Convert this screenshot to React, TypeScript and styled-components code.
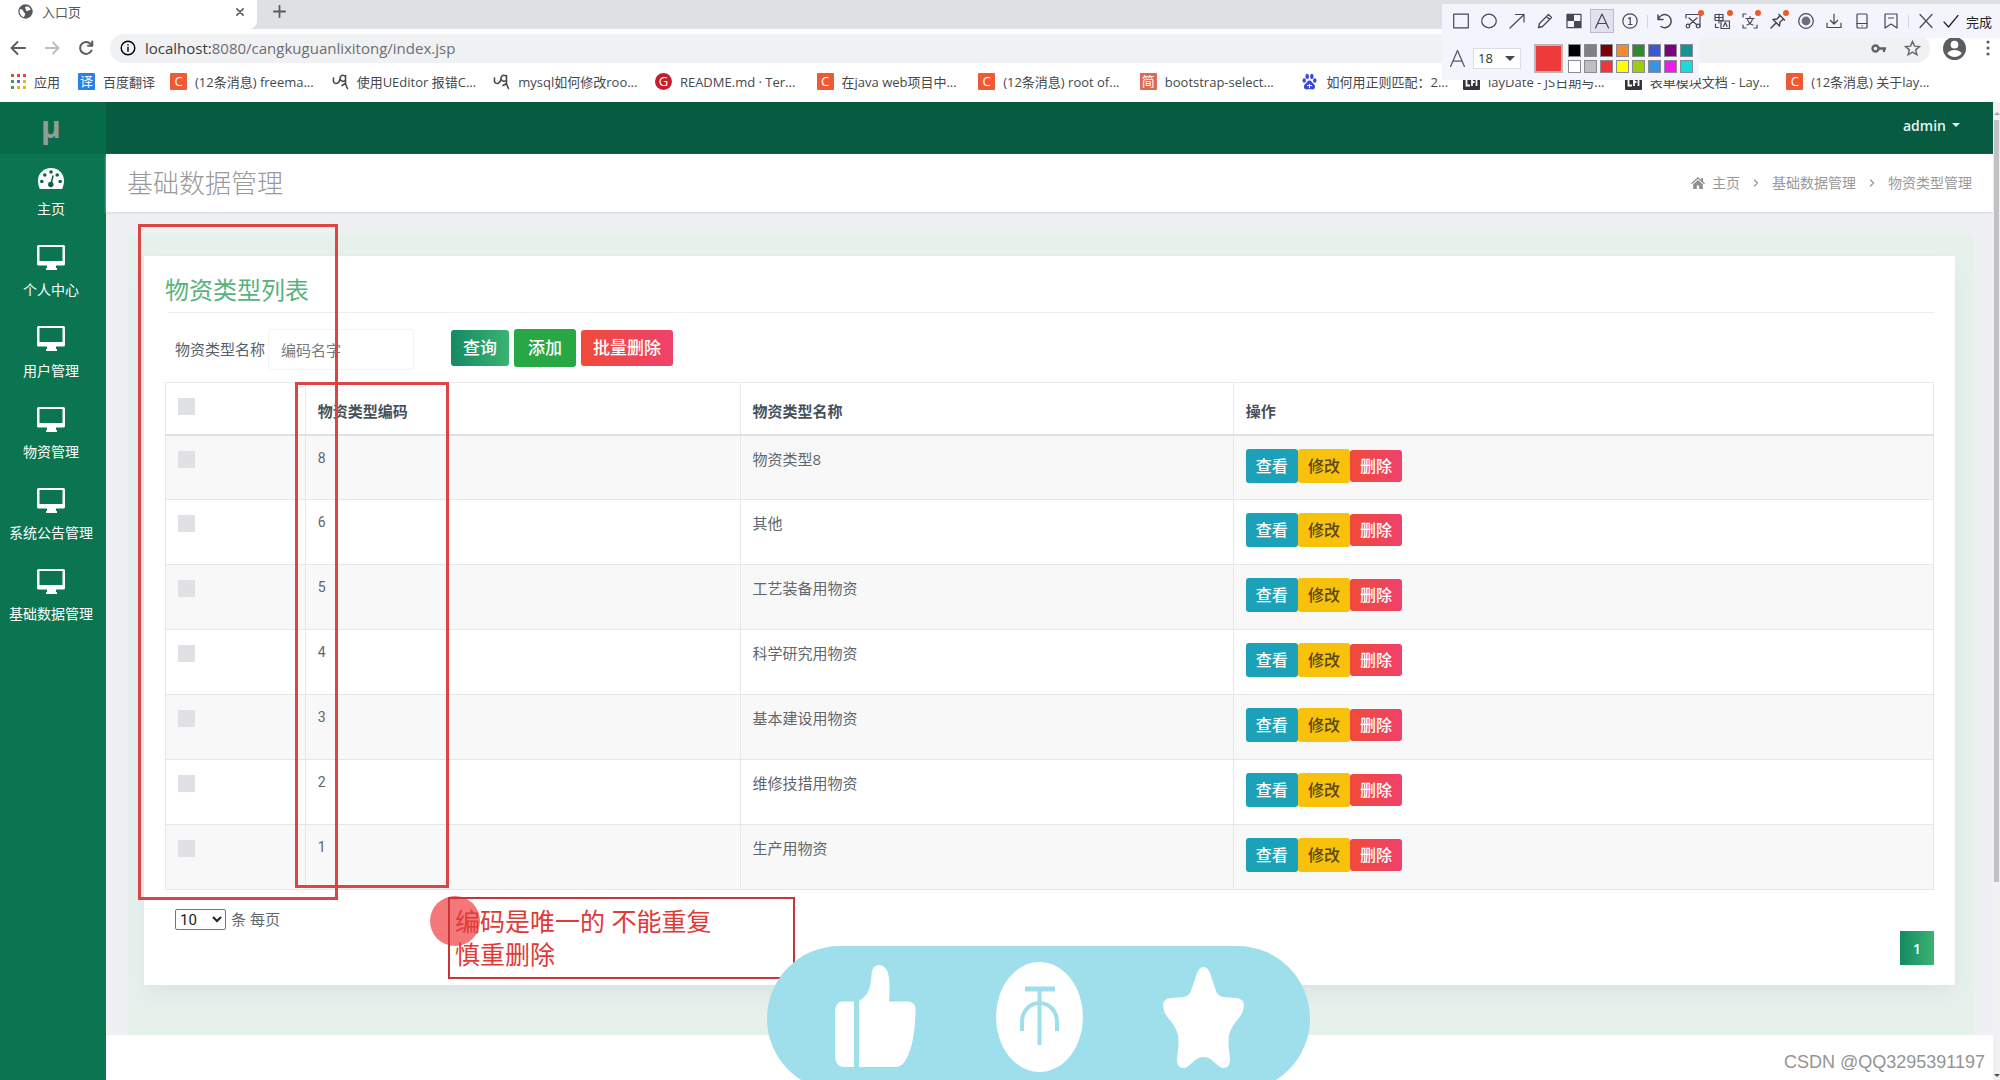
import React from "react";
import styled, { createGlobalStyle, css } from "styled-components";

const Global = createGlobalStyle`
  * { box-sizing: border-box; }
  html, body { margin: 0; padding: 0; }
  body {
    font-family: "Open Sans", "Noto Sans CJK SC", sans-serif;
    background: #fff;
    overflow: hidden;
  }
  button, input, select { font-family: inherit; margin: 0; }
  a { color: inherit; text-decoration: none; }
`;

const Screen = styled.div`
  display: flex;
  flex-direction: column;
  height: 100vh;
  position: relative;
  overflow: hidden;
`;

/* ---------- browser frame ---------- */
const TabStrip = styled.div`
  display: flex;
  height: 29px;
  background: #dfe0e4;
`;
const Tab = styled.div`
  display: flex;
  align-items: center;
  width: 257px;
  padding: 0 12px 6px 18px;
  background: #fff;
  border-radius: 0 0 8px 0;
  font-size: 13px;
  color: #55585c;
`;
const TabTitle = styled.span`
  flex: 1;
  margin-left: 9px;
  line-height: 20px;
`;
const PlainButton = styled.button`
  display: inline-flex;
  align-items: center;
  justify-content: center;
  padding: 0;
  border: 0;
  background: transparent;
  color: #5a5d61;
`;
const NewTab = styled(PlainButton)`
  width: 44px;
  padding-bottom: 6px;
`;
const AddressRow = styled.div`
  display: flex;
  align-items: center;
  height: 38px;
  padding-left: 10px;
  background: #fff;
`;
const NavButtons = styled.div`
  display: flex;
  gap: 18px;
  width: 100px;
`;
const Omnibox = styled.div`
  display: flex;
  align-items: center;
  flex: 1;
  gap: 9px;
  height: 29px;
  padding: 0 9px 0 10px;
  border-radius: 14px;
  background: #f0f1f3;
`;
const UrlActions = styled.div`
  display: flex;
  align-items: center;
  gap: 17px;
`;
const Profile = styled.div`
  display: flex;
  align-items: center;
  justify-content: space-between;
  width: 70px;
  padding: 0 8px 0 13px;
`;
const UrlText = styled.span`
  flex: 1;
  font-size: 15px;
  color: #6b6e72;
  white-space: nowrap;
`;
const Host = styled.span`
  color: #3a3d40;
`;
const Bookmarks = styled.nav`
  display: flex;
  align-items: center;
  height: 35px;
  padding: 0 52px 6px 11px;
  background: #fff;
  font-size: 13px;
  color: #45484c;
`;
const Bookmark = styled.a<{ $w?: number }>`
  display: flex;
  align-items: center;
  gap: 8px;
  width: ${(p) => (p.$w ? p.$w + "px" : "auto")};
  min-width: 0;
  white-space: nowrap;
`;
const BookmarkGrid = styled.div`
  display: grid;
  grid-template-columns: repeat(11, 1fr);
  flex: 1;
  min-width: 0;
`;
const Fav = styled.span<{ $bg: string; $round?: boolean }>`
  display: inline-flex;
  align-items: center;
  justify-content: center;
  flex: none;
  width: 17px;
  height: 17px;
  border-radius: ${(p) => (p.$round ? "50%" : "1px")};
  background: ${(p) => p.$bg};
  color: #fff;
  font-size: 13px;
  line-height: 17px;
`;

/* ---------- page shell ---------- */
const Body = styled.div`
  display: flex;
  flex: 1;
  min-height: 0;
`;
const Sidebar = styled.aside`
  flex: none;
  width: 106px;
  background: #0a7550;
`;
const Logo = styled.div`
  height: 52px;
  background: #076a49;
  color: #8f9f98;
  font: bold 30px/50px "Open Sans", sans-serif;
  text-align: center;
  padding-right: 4px;
`;
const MenuItem = styled.a`
  display: flex;
  flex-direction: column;
  align-items: center;
  gap: 8px;
  height: 81px;
  padding: 8px 4px 0 0;
  color: #fff;
  font-size: 14px;
  line-height: 20px;
  white-space: nowrap;
`;
const Main = styled.main`
  flex: 1;
  min-width: 0;
  background: #fff;
`;
const TopBar = styled.header`
  display: flex;
  justify-content: flex-end;
  align-items: center;
  height: 52px;
  padding: 0 33px 6px 0;
  background: #065b40;
`;
const UserButton = styled(PlainButton)`
  gap: 6px;
  color: #e8f4ef;
  font-size: 14px;
  font-weight: 600;
`;
const Caret = styled.span`
  border: 4px solid transparent;
  border-top-color: currentColor;
  border-bottom: 0;
`;
const TitleBar = styled.div`
  display: flex;
  align-items: center;
  justify-content: space-between;
  height: 58px;
  padding: 0 21px;
  background: #fff;
  position: relative;
  box-shadow: 0 1px 2px #d5d6da;
`;
const PageTitle = styled.h1`
  margin: 0;
  font-size: 26px;
  line-height: 36px;
  font-weight: 300;
  color: #999;
`;
const Crumbs = styled.nav`
  display: flex;
  align-items: center;
  gap: 12px;
  font-size: 14px;
  line-height: 20px;
  color: #999;
`;
const Crumb = styled.a`
  display: inline-flex;
  align-items: center;
  gap: 7px;
`;
const Content = styled.div`
  padding: 23px 19px 0 22px;
  background: #eff0f3;
`;
const Glow = styled.div`
  padding: 21px 19px 50px 16px;
  background: #e6f1ec;
  box-shadow: 0 0 8px #e8f1ee;
  clip-path: inset(-10px -10px 0 -10px);
`;
const Card = styled.section`
  padding: 17px 21px 20px 21px;
  background: #fff;
  box-shadow: 0 12px 20px -4px #d9e3e5, 0 0 3px #dfe9e8;
`;
const CardTitle = styled.h2`
  margin: 0 0 5px;
  font-size: 24px;
  line-height: 34px;
  font-weight: 400;
  color: #57b27c;
`;
const Rule = styled.hr`
  margin: 0 0 16px 3px;
  border: 0;
  border-top: 1px solid #ededee;
`;
const Filter = styled.form`
  display: flex;
  align-items: center;
  gap: 5px;
  height: 41px;
  margin-bottom: 12px;
  padding-left: 10px;
`;
const FilterLabel = styled.label`
  padding-bottom: 2px;
  font-size: 15px;
  color: #55606a;
`;
const FilterInput = styled.input`
  width: 146px;
  height: 41px;
  margin: 0 32px 0 -2px;
  padding: 0 12px;
  border: 1px solid #f3f4f1;
  border-radius: 3px;
  background: #fff;
  font-size: 15px;
  color: #555;
  &::placeholder { color: #757b80; opacity: 1; }
`;

type Tone = "query" | "add" | "danger" | "view" | "edit";
const tones: Record<Tone, ReturnType<typeof css>> = {
  query: css`background: linear-gradient(90deg, #148a62, #3bb371);`,
  add: css`background: #28a745;`,
  danger: css`background: linear-gradient(90deg, #f04a3a, #f0416c);`,
  view: css`background: #1ba2b8;`,
  edit: css`background: #f8c10c; color: #5b4716;`,
};
const Btn = styled.button<{ $tone: Tone }>`
  flex: none;
  height: ${(p) => (p.$tone === "add" ? 38 : 36)}px;
  margin-bottom: 4px;
  padding: 0 ${(p) => (p.$tone === "add" ? 14 : 12)}px;
  border: 0;
  border-radius: 3px;
  color: #fff;
  font-size: 17px;
  font-weight: 500;
  line-height: 24px;
  ${(p) => tones[p.$tone]}
`;
const RowBtn = styled(Btn)`
  height: ${(p) => (p.$tone === "danger" ? 32 : 34)}px;
  margin: 0;
  padding: 0 10px;
  font-size: 16px;
`;
const Actions = styled.div`
  display: flex;
  align-items: center;
`;

const Table = styled.table`
  width: 100%;
  table-layout: fixed;
  border-collapse: collapse;
  font-size: 15px;
  line-height: 20px;
  color: #5f666c;
`;
const Th = styled.th<{ $w: string }>`
  width: ${(p) => p.$w};
  height: 52px;
  padding: 18px 12px 0;
  border: 1px solid #e9ecef;
  border-bottom: 2px solid #dee1e5;
  text-align: left;
  vertical-align: top;
  font-weight: 600;
  color: #47515b;
`;
const Tr = styled.tr`
  height: 65px;
  &:nth-child(odd) { background: #f8f8f9; }
`;
const Td = styled.td`
  padding: 13px 12px 0;
  border: 1px solid #e5e8eb;
  vertical-align: top;
`;
const CodeTd = styled(Td)`
  font-family: Roboto, sans-serif;
  font-size: 14px;
  line-height: 18px;
`;
const Check = styled.input`
  display: block;
  appearance: none;
  width: 17px;
  height: 17px;
  margin: 2px 0 0;
  background: #e0e1e4;
`;
const HeadCheck = styled(Check)`
  margin-top: -3px;
`;
const PageSize = styled.div`
  display: flex;
  align-items: flex-start;
  gap: 5px;
  height: 22px;
  margin-top: 19px;
  padding-left: 10px;
  font-size: 15px;
  line-height: 20px;
  color: #5f666c;
`;
const SizeSelect = styled.select`
  width: 51px;
  height: 21px;
  padding: 0;
  border: 1px solid #767676;
  border-radius: 2px;
  background: #fff;
  color: #222;
  font-family: Roboto, sans-serif;
  font-size: 15px;
`;
const Pager = styled.nav`
  display: flex;
  justify-content: flex-end;
`;
const PageButton = styled.button`
  width: 34px;
  height: 34px;
  padding: 0;
  border: 0;
  background: linear-gradient(90deg, #148a62, #3bb371);
  color: #fff;
  font-weight: 600;
  font-size: 14px;
`;
const ScrollTrack = styled.div`
  display: flex;
  flex-direction: column;
  justify-content: space-between;
  align-items: center;
  flex: none;
  width: 7px;
  padding: 10px 0 3px;
  background: #f1f1f2;
`;
const Thumb = styled.div`
  flex: none;
  width: 5px;
  height: 79%;
  margin: 5px 0 auto;
  background: #c1c1c3;
`;
const ArrowMark = styled.span<{ $up?: boolean }>`
  border: 3px solid transparent;
  ${(p) => (p.$up ? "border-bottom-color: #a5a5a7; border-top: 0;" : "border-top-color: #505052; border-bottom: 0;")}
`;

/* ---------- screen annotation layer ---------- */
const Capture = styled.div`
  position: absolute;
  top: 4px;
  right: 0;
  width: 558px;
`;
const ToolRow = styled.div`
  display: flex;
  align-items: center;
  height: 34px;
  padding: 0 8px 0 8px;
  background: #f3f4fc;
  justify-content: space-between;
`;
const Tool = styled(PlainButton)<{ $active?: boolean; $dot?: boolean }>`
  position: relative;
  width: 22px;
  height: 22px;
  color: #44465a;
  ${(p) => p.$active && "background: #e0e3ef; outline: 1px solid #b9bccb;"}
  ${(p) =>
    p.$dot &&
    `&::after { content: ""; position: absolute; top: 0; right: 0; width: 6px; height: 6px; border-radius: 50%; background: #ee5a2b; }`}
`;
const Divider = styled.i`
  width: 1px;
  height: 13px;
  background: #d3d5e2;
`;
const Done = styled(PlainButton)`
  gap: 7px;
  color: #222;
  font-size: 13px;
  white-space: nowrap;
`;
const StyleRow = styled.div`
  display: flex;
  align-items: center;
  width: 257px;
  height: 42px;
  padding: 0 0 2px 7px;
  background: #f3f4fc;
  color: #55576a;
`;
const SizeBox = styled.div`
  position: relative;
  display: flex;
  margin: 0 13px 0 7px;
`;
const FontSize = styled.select`
  appearance: none;
  width: 48px;
  height: 21px;
  padding: 0 0 0 4px;
  border: 1px solid #dcdee6;
  background: #fff;
  color: #333;
  font-size: 13px;
`;
const SizeCaret = styled.span`
  position: absolute;
  right: 6px;
  top: 8px;
  border: 5px solid transparent;
  border-top-color: #44464c;
  border-bottom: 0;
  pointer-events: none;
`;
const Current = styled.span`
  width: 29px;
  height: 29px;
  margin-right: 5px;
  border: 2px solid #b8b8bc;
  background: #ef3a3c;
`;
const Palette = styled.div`
  display: grid;
  grid-template-columns: repeat(8, 13px);
  gap: 3px;
`;
const Swatch = styled.button<{ $c: string }>`
  width: 13px;
  height: 13px;
  padding: 0;
  border: 1px solid #8b8b93;
  background: ${(p) => p.$c};
`;
const Mark = styled.div<{ $x: number; $y: number; $w: number; $h: number }>`
  position: absolute;
  left: ${(p) => p.$x}px;
  top: ${(p) => p.$y}px;
  width: ${(p) => p.$w}px;
  height: ${(p) => p.$h}px;
  border: 3px solid #dd4446;
  pointer-events: none;
`;
const Note = styled(Mark)`
  padding: 6px 5px;
  border: 2px solid #cb3436;
  color: #e03a38;
  font-size: 25px;
  line-height: 33px;
  white-space: nowrap;
`;
const Pointer = styled.div`
  position: absolute;
  left: 430px;
  top: 896px;
  width: 50px;
  height: 50px;
  border-radius: 50%;
  background: rgba(240, 62, 66, 0.7);
`;
const Pill = styled.div`
  position: absolute;
  left: 767px;
  bottom: -11px;
  display: flex;
  width: 543px;
  height: 145px;
  padding: 16px 0 0 68px;
  border-radius: 73px;
  background: #9fdfeb;
`;
const PillIcon = styled.svg`
  flex: none;
  height: 110px;
  margin-right: 80px;
`;
const Watermark = styled.div`
  position: absolute;
  right: 15px;
  bottom: 6px;
  font: 18px/24px "Liberation Sans", sans-serif;
  color: #949494;
`;

const S = ({ d, w = 16, children, sw = 1.2 }: { d?: string; w?: number; sw?: number; children?: React.ReactNode }) => (
  <svg width={w} height={w} viewBox="0 0 16 16" fill="none" stroke="currentColor" strokeWidth={sw} strokeLinecap="round" strokeLinejoin="round" aria-hidden="true">
    {d && <path d={d} />}
    {children}
  </svg>
);

const Monitor = () => (
  <svg width="30" height="29" viewBox="0 0 30 29" aria-hidden="true">
    <path fill="#fff" fillRule="evenodd" d="M2.500 2h25a1.500 1.500 0 0 1 1.500 1.500V21a1.500 1.500 0 0 1-1.500 1.500H20V25h1v2H10v-2h1v-2.500H2.500A1.500 1.500 0 0 1 1 21V3.500A1.500 1.500 0 0 1 2.500 2zM3.500 4v14h23V4z" />
  </svg>
);
const Gauge = () => (
  <svg width="28" height="29" viewBox="0 0 28 29" aria-hidden="true">
    <path fill="#fff" d="M14 6C6.500 6 1 11.500 1 18.500c0 3 .6 5.600 1.800 8.500h22.400c1.200-2.900 1.800-5.500 1.800-8.500C27 11.500 21.500 6 14 6z" />
    <g fill="#0a6446">
      <circle cx="14" cy="10" r="1.800" />
      <circle cx="7.800" cy="13" r="1.800" />
      <circle cx="20.200" cy="13" r="1.800" />
      <circle cx="4.800" cy="19.500" r="1.800" />
      <circle cx="23.200" cy="19.500" r="1.800" />
      <circle cx="13.800" cy="22.500" r="2.700" />
    </g>
    <path d="M14 22.500 16 13.500" stroke="#0a6446" strokeWidth="1.500" />
  </svg>
);

const Ueditor = () => (
  <svg width="17" height="17" viewBox="0 0 17 17" fill="none" stroke="#4a4a4e" strokeWidth="1.600" strokeLinecap="round" strokeLinejoin="round" aria-hidden="true">
    <path d="M1.500 5c-.5 4 .5 5.500 2.500 5.500S8 8 8 5.500M13.500 3.500C11 1 8 2.500 8 5.200S11 9 13.500 7.500V2.500V11L15.500 15.500M13.500 10.500 10 12.500" />
  </svg>
);
const Paw = () => (
  <svg width="17" height="17" viewBox="0 0 17 17" fill="#3a49d6" aria-hidden="true">
    <ellipse cx="6.200" cy="3.400" rx="1.800" ry="2.600" />
    <ellipse cx="10.800" cy="3.400" rx="1.800" ry="2.600" />
    <ellipse cx="3.200" cy="7.500" rx="1.700" ry="2.300" />
    <ellipse cx="13.800" cy="7.500" rx="1.700" ry="2.300" />
    <path d="M8.500 7.500c2 0 2.700 2.200 4.300 3.500 2.200 2 1.400 5.500-1.300 5.500-1.200 0-2-.4-3-.4s-1.800.4-3 .4c-2.700 0-3.500-3.500-1.300-5.500 1.600-1.300 2.300-3.500 4.300-3.500z" />
    <path d="M6 12.500h5M8.500 11v4" stroke="#fff" strokeWidth="1" />
  </svg>
);
const LayMark = () => (
  <svg width="17" height="17" viewBox="0 0 17 17" aria-hidden="true">
    <rect width="17" height="17" rx="1" fill="#34343d" />
    <path d="M3.500 4v8.500H7M9 13V5.500h4.500V13M9 9h2.500" stroke="#fff" strokeWidth="1.800" fill="none" />
  </svg>
);
const csdn = <Fav $bg="#ee5a35">C</Fav>;

const bookmarks: { icon: React.ReactNode; text: string }[] = [
  { icon: csdn, text: "(12条消息) freema..." },
  { icon: <Ueditor />, text: "使用UEditor 报错C..." },
  { icon: <Ueditor />, text: "mysql如何修改roo..." },
  { icon: <Fav $bg="#c71d2f" $round>G</Fav>, text: "README.md · Ter..." },
  { icon: csdn, text: "在java web项目中..." },
  { icon: csdn, text: "(12条消息) root of..." },
  { icon: <Fav $bg="#dd6a56">简</Fav>, text: "bootstrap-select..." },
  { icon: <Paw />, text: "如何用正则匹配：2..." },
  { icon: <LayMark />, text: "layDate - JS日期与..." },
  { icon: <LayMark />, text: "表单模块文档 - Lay..." },
  { icon: csdn, text: "(12条消息) 关于lay..." },
];

const menu = ["主页", "个人中心", "用户管理", "物资管理", "系统公告管理", "基础数据管理"];

const rows: [number, string][] = [
  [8, "物资类型8"],
  [6, "其他"],
  [5, "工艺装备用物资"],
  [4, "科学研究用物资"],
  [3, "基本建设用物资"],
  [2, "维修技措用物资"],
  [1, "生产用物资"],
];

const colors = [
  "#000000", "#808080", "#7d0004", "#f28c34", "#2f8a2b", "#3a5bd0", "#7d007f", "#119696",
  "#ffffff", "#c0bfc0", "#ef3638", "#ffff00", "#9bcc10", "#3a93e2", "#ee1bee", "#1adada",
];

const tools: { name: string; icon: React.ReactNode; active?: boolean; dot?: boolean }[] = [
  { name: "矩形", icon: <S><rect x="0.700" y="1.200" width="14.600" height="13.600" /></S> },
  { name: "椭圆", icon: <S><ellipse cx="8" cy="8" rx="7.300" ry="6.800" /></S> },
  { name: "箭头", icon: <S d="M1 15 15 1.500M6.500 1.500H15V9" /> },
  { name: "画笔", icon: <S d="M1.500 14.500 2.500 10.500 11.500 1.500 14.500 4.500 5.500 13.500zM9.500 3.500l3 3" sw={1.300} /> },
  {
    name: "马赛克",
    icon: (
      <S>
        <rect x="1" y="1.300" width="14" height="13.400" />
        <path d="M1 1.300h7V8H1zM8 8h7v6.700H8z" fill="currentColor" stroke="none" />
      </S>
    ),
  },
  { name: "文字", icon: <S d="M1.500 15 8 1 14.500 15M4 10.500h8" />, active: true },
  { name: "序号", icon: <S><circle cx="8" cy="8" r="7.200" /><path d="M6.500 5.500 8.200 4.500v7M6.500 11.500H10" /></S> },
  { name: "|", icon: null },
  { name: "撤销", icon: <S d="M1 2v4.500h5M1.500 6A6.500 6.500 0 1 1 4 13.500" sw={1.500} /> },
  { name: "剪裁", icon: <S d="M1 5V1.500h14V14M4 5l8 7M12 5l-8 7"><circle cx="3" cy="13" r="1.800" /><circle cx="13" cy="13" r="1.800" /></S>, dot: true },
  { name: "翻译", icon: <S d="M1 1.500h8v6H1zM1 4.500h8M5 1v9M7 8h8.500v7.500H7zM9.500 13.500l1.800-4 1.800 4M1.500 11v3.500h3" />, dot: true },
  { name: "文字识别", icon: <S d="M1 4V1h3M1 12v3h3M12 15h3v-3M4 5.500h8M8 3.500v2M5 12c3-1 5-3.500 5.500-6.500M5.500 6c.5 3 2.500 5 5.500 6" />, dot: true },
  { name: "钉住", icon: <S d="M9 1.500 14.500 7M10 2.500 7 6 3 6.500 9.500 13 10 9l3.500-3M6 10l-5 5" sw={1.500} />, dot: true },
  { name: "录屏", icon: <S><circle cx="8" cy="8" r="7.300" /><circle cx="8" cy="8" r="3.800" fill="#6c6d7c" stroke="#6c6d7c" /></S> },
  { name: "保存", icon: <S d="M8 1v10M4.500 7.500 8 11l3.500-3.500M1 10v4.500h14V10" /> },
  { name: "手机", icon: <S><rect x="3" y="1" width="10" height="14" rx="1" /><path d="M3 10.500h10M8 12.700v.2" /></S> },
  { name: "收藏", icon: <S d="M2 1h12v14l-6-4-6 4zM5.500 5h5" /> },
  { name: "|", icon: null },
  { name: "关闭", icon: <S d="M2 1.500 14 14.500M14 1.500 2 14.500" /> },
];

export default function App() {
  return (
    <Screen>
      <Global />
      <TabStrip>
        <Tab>
          <svg width="15" height="15" viewBox="0 0 15 15" aria-hidden="true">
            <circle cx="7.500" cy="7.500" r="7.200" fill="#55585d" />
            <path d="M2 5c2 0 3 1 3.500 2.500S8 9 7 11s-1 2-2 2-3-3-3.500-5zM8 2.500c2-.5 4 1 4.500 2.500S10 6 9.500 7 8 6 7.500 5 7 3 8 2.500z" fill="#fff" />
          </svg>
          <TabTitle>入口页</TabTitle>
          <PlainButton aria-label="关闭标签页"><S w={10} d="M3 3l10 10M13 3 3 13" sw={2.600} /></PlainButton>
        </Tab>
        <NewTab aria-label="新标签页"><S w={13} d="M8 1v14M1 8h14" sw={2.200} /></NewTab>
      </TabStrip>
      <AddressRow>
        <NavButtons>
          <PlainButton aria-label="后退"><S d="M15 8H1.500M7.500 2 1.500 8l6 6" sw={1.900} /></PlainButton>
          <PlainButton aria-label="前进"><svg width="16" height="16" viewBox="0 0 16 16" fill="none" stroke="#bcbec1" strokeWidth="1.900"><path d="M1 8h13.500M8.500 2l6 6-6 6" /></svg></PlainButton>
          <PlainButton aria-label="刷新"><S d="M13.500 10.500A6 6 0 1 1 12.500 3.800L14 5.500M14.300 1.500v4.300H10" sw={2} /></PlainButton>
        </NavButtons>
        <Omnibox>
          <S sw={1.400}><circle cx="8" cy="8" r="6.800" /><path d="M8 7.300v4M8 4.700v.2" /></S>
          <UrlText><Host>localhost:</Host>8080/cangkuguanlixitong/index.jsp</UrlText>
          <UrlActions>
            <svg width="16" height="11" viewBox="0 0 16 11" fill="none" stroke="#5f6266" strokeWidth="2.400" aria-hidden="true"><circle cx="4.500" cy="5.500" r="3" /><path d="M7.500 5.500H15M13 5.500V9" /></svg>
            <svg width="17" height="17" viewBox="0 0 16 16" fill="none" stroke="#66696d" strokeWidth="1.400" aria-hidden="true"><path d="M8 1.500l1.900 4.300 4.600.4-3.500 3.100 1.100 4.600L8 11.500l-4.100 2.400L5 9.300 1.500 6.200l4.600-.4z" /></svg>
          </UrlActions>
        </Omnibox>
        <Profile>
          <svg width="23" height="23" viewBox="0 0 24 24" aria-hidden="true"><circle cx="12" cy="12" r="12" fill="#5a5d61" /><circle cx="12" cy="8" r="4" fill="#fff" /><path d="M4.500 17c1.500-2.500 5-3.500 7.500-3.500s6 1 7.500 3.500c-2 2.700-4.500 3.800-7.500 3.800S6.500 19.700 4.500 17z" fill="#fff" /></svg>
          <svg width="8" height="16" viewBox="0 0 8 16" fill="#5a5d61" aria-hidden="true"><circle cx="4" cy="2" r="1.600" /><circle cx="4" cy="8" r="1.600" /><circle cx="4" cy="14" r="1.600" /></svg>
        </Profile>
      </AddressRow>
      <Bookmarks>
        <Bookmark href="#" $w={67}>
          <svg width="15" height="15" viewBox="0 0 15 15" aria-hidden="true">
            {["#e0483e", "#e0483e", "#e0483e", "#3f9d5a", "#3b78d8", "#e8b22a", "#3f9d5a", "#e8b22a", "#e8b22a"].map((c, i) => (
              <rect key={i} x={(i % 3) * 6} y={Math.floor(i / 3) * 6} width="3" height="3" fill={c} />
            ))}
          </svg>
          应用
        </Bookmark>
        <Bookmark href="#" $w={92}><Fav $bg="#2a7fe8">译</Fav>百度翻译</Bookmark>
        <BookmarkGrid>
          {bookmarks.map((b, i) => (
            <Bookmark key={i} href="#">{b.icon}{b.text}</Bookmark>
          ))}
        </BookmarkGrid>
      </Bookmarks>

      <Body>
        <Sidebar>
          <Logo>μ</Logo>
          {menu.map((m, i) => (
            <MenuItem key={m} href="#">{i === 0 ? <Gauge /> : <Monitor />}{m}</MenuItem>
          ))}
        </Sidebar>
        <Main>
          <TopBar><UserButton>admin<Caret /></UserButton></TopBar>
          <TitleBar>
            <PageTitle>基础数据管理</PageTitle>
            <Crumbs>
              <Crumb href="#">
                <svg width="14" height="12" viewBox="0 0 14 12" fill="#8f8f8f" aria-hidden="true"><path d="M7 0 0 6.300l.8.900L7 1.800l6.200 5.400.8-.9-2-1.800V1h-1.800v2zM2.200 7.300V12h3.600V8.500h2.400V12h3.600V7.300L7 3z" /></svg>
                主页
              </Crumb>
              <S w={8} d="M5 2l6 6-6 6" sw={2.600} />
              <Crumb href="#">基础数据管理</Crumb>
              <S w={8} d="M5 2l6 6-6 6" sw={2.600} />
              <span>物资类型管理</span>
            </Crumbs>
          </TitleBar>
          <Content>
            <Glow>
              <Card>
                <CardTitle>物资类型列表</CardTitle>
                <Rule />
                <Filter onSubmit={(e) => e.preventDefault()}>
                  <FilterLabel htmlFor="type-name">物资类型名称</FilterLabel>
                  <FilterInput id="type-name" placeholder="编码名字" />
                  <Btn type="submit" $tone="query">查询</Btn>
                  <Btn type="button" $tone="add">添加</Btn>
                  <Btn type="button" $tone="danger">批量删除</Btn>
                </Filter>
                <Table>
                  <thead>
                    <tr>
                      <Th $w="7.9%"><HeadCheck type="checkbox" aria-label="全选" /></Th>
                      <Th $w="24.6%">物资类型编码</Th>
                      <Th $w="27.9%">物资类型名称</Th>
                      <Th $w="39.6%">操作</Th>
                    </tr>
                  </thead>
                  <tbody>
                    {rows.map(([code, name]) => (
                      <Tr key={code}>
                        <Td><Check type="checkbox" aria-label={name} /></Td>
                        <CodeTd>{code}</CodeTd>
                        <Td>{name}</Td>
                        <Td>
                          <Actions>
                            <RowBtn $tone="view">查看</RowBtn>
                            <RowBtn $tone="edit">修改</RowBtn>
                            <RowBtn $tone="danger">删除</RowBtn>
                          </Actions>
                        </Td>
                      </Tr>
                    ))}
                  </tbody>
                </Table>
                <PageSize>
                  <SizeSelect id="page-size" defaultValue="10"><option>10</option><option>25</option><option>50</option></SizeSelect>
                  <label htmlFor="page-size">条 每页</label>
                </PageSize>
                <Pager><PageButton>1</PageButton></Pager>
              </Card>
            </Glow>
          </Content>
        </Main>
        <ScrollTrack><ArrowMark $up /><Thumb /><ArrowMark /></ScrollTrack>
      </Body>

      <Pointer />
      <Mark $x={138} $y={224} $w={200} $h={676} />
      <Mark $x={295} $y={382} $w={154} $h={506} />
      <Note $x={448} $y={897} $w={347} $h={82}>编码是唯一的 不能重复<br />慎重删除</Note>

      <Pill>
        <PillIcon width="81" viewBox="0 0 81 110" fill="#fff">
          <path d="M7 39.500h12V105H8Q0 104 0 94V48Q1 40 7 39.500z" />
          <path d="M24 39q10-6 11.500-17L37 9q2-6 7-6 6 0 9 8 2.500 9 1 28.500h19q8 .5 7.500 9-.5 32-9 48-4 8-10 8.500H24z" />
        </PillIcon>
        <PillIcon width="87" viewBox="0 0 87 110">
          <ellipse cx="43.500" cy="55" rx="43.500" ry="55" fill="#fff" />
          <path d="M29 27h30" stroke="#9fdfeb" strokeWidth="5" />
          <path d="M43.500 27v56M26 69V60c0-11 8-19 17.500-19S61 49 61 60v9" fill="none" stroke="#9fdfeb" strokeWidth="4" />
        </PillIcon>
        <PillIcon width="81" viewBox="0 0 81 110" fill="#fff">
          <path d="M40.500 5q5 0 7.500 9l4 12q2 8 8 9l13 1q8 1 8 7 0 7-6 14-7 8-9 16-1 7 0 15l1 9q0 9-6 9-4 0-10-6-5-5-10.500-5T30 100q-6 6-10 6-6 0-6-9l1-9q1-8 0-15-2-8-9-16-6-7-6-14 0-6 8-7l13-1q6-1 8-9l4-12q2.500-9 7.500-9z" />
        </PillIcon>
      </Pill>
      <Watermark>CSDN @QQ3295391197</Watermark>

      <Capture>
        <ToolRow>
          {tools.map((t, i) =>
            t.name === "|" ? <Divider key={i} /> : (
              <Tool key={i} aria-label={t.name} $active={t.active} $dot={t.dot}>{t.icon}</Tool>
            )
          )}
          <Done><S d="M1 9l4.500 5L15 2.500" />完成</Done>
        </ToolRow>
        <StyleRow>
          <S d="M1.500 15.500 8 .5 14.500 15.500M4 10.500h8" w={17} />
          <SizeBox>
            <FontSize aria-label="字号" defaultValue="18"><option>18</option><option>24</option></FontSize>
            <SizeCaret />
          </SizeBox>
          <Current />
          <Palette>
            {colors.map((c) => <Swatch key={c} $c={c} aria-label={c} />)}
          </Palette>
        </StyleRow>
      </Capture>
    </Screen>
  );
}
